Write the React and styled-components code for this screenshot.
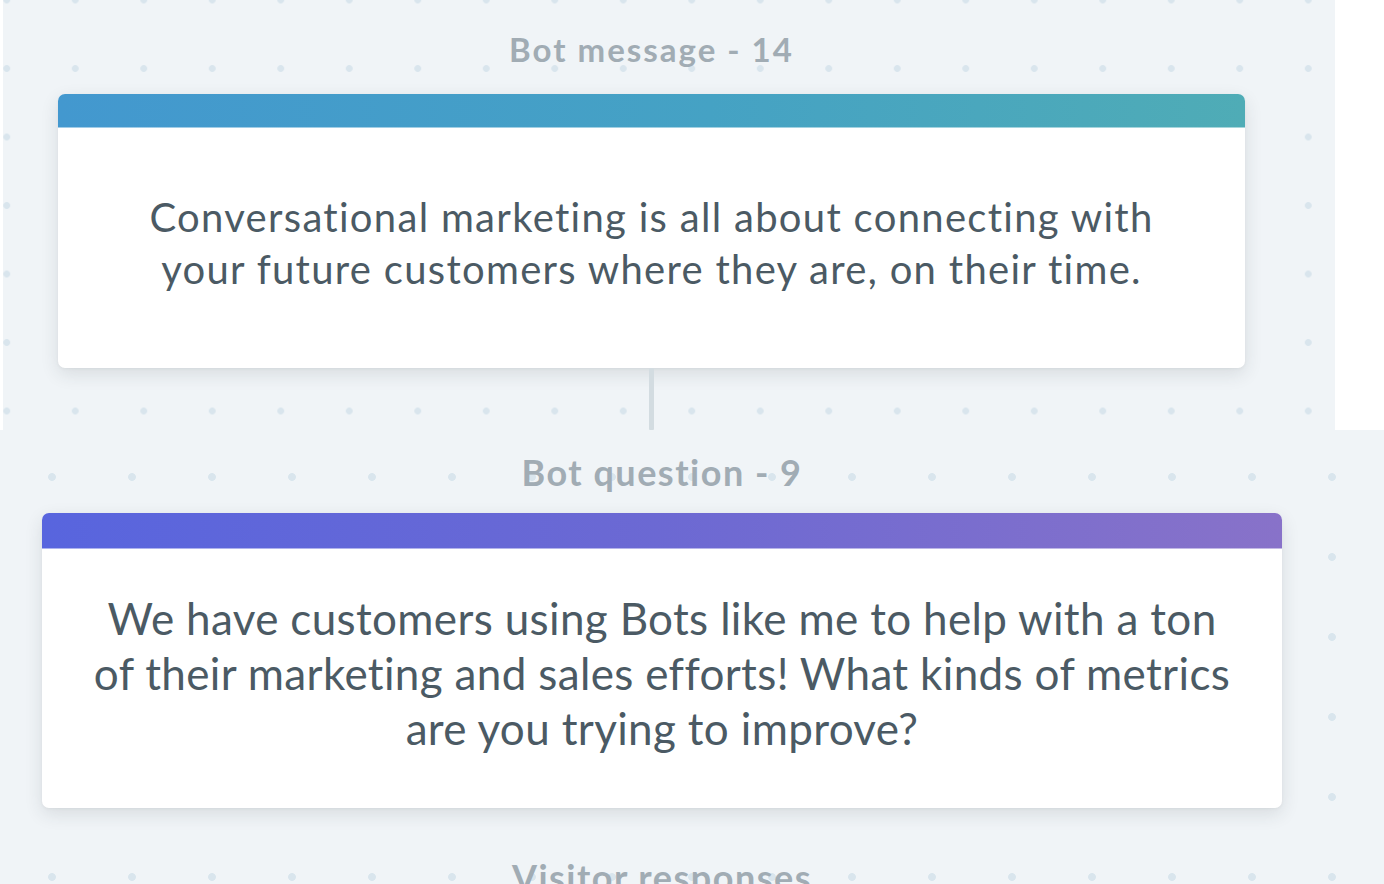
import React from "react";
import styled, { createGlobalStyle } from "styled-components";

const GlobalStyle = createGlobalStyle`
  html, body {
    margin: 0;
    padding: 0;
    background: #ffffff;
    font-family: "Lato", "Liberation Sans", sans-serif;
    font-variant-ligatures: none;
    overflow: hidden;
  }
`;

const Page = styled.div`
  width: 1384px;
  height: 884px;
  display: flex;
  flex-direction: column;
  overflow: hidden;
`;

const Canvas = styled.div`
  box-sizing: border-box;
  flex: none;
  display: flex;
  flex-direction: column;
  align-items: stretch;
  overflow: hidden;
  background-color: #f0f4f7;
  background-image: radial-gradient(
    circle,
    #d9e5ed ${(props) => props.dot}px,
    rgba(217, 229, 237, 0) ${(props) => props.dot + 0.8}px
  );
  background-size: ${(props) => props.grid}px ${(props) => props.grid}px;
  background-position: ${(props) => props.offset};
  width: ${(props) => props.width}px;
  height: ${(props) => props.height}px;
  margin-left: ${(props) => props.shift}px;
  padding: ${(props) => props.pad};

  & > * {
    flex: none;
  }
`;

const StepLabel = styled.div`
  text-align: center;
  color: #a1acb4;
  font-weight: 700;
  font-size: ${(props) => props.size}px;
  line-height: ${(props) => props.size * 1.2}px;
  letter-spacing: ${(props) => props.spacing}px;
  margin-top: ${(props) => props.top || 0}px;
  margin-bottom: ${(props) => props.gap || 0}px;
`;

const Card = styled.div`
  background: #ffffff;
  border-radius: 7px;
  box-shadow: 0 6px 18px rgba(40, 50, 60, 0.12), 0 1px 3px rgba(40, 50, 60, 0.05);
  overflow: hidden;
`;

const CardHeader = styled.div`
  height: ${(props) => props.height}px;
  background: ${(props) => props.gradient};
  border-bottom: 1px solid rgba(255, 255, 255, 0.5);
`;

const CardBody = styled.div`
  box-sizing: border-box;
  height: ${(props) => props.height}px;
  padding: ${(props) => props.pad};
  text-align: center;
  white-space: nowrap;
  color: #4b5a64;
  font-size: ${(props) => props.size}px;
  line-height: ${(props) => props.lh}px;
  letter-spacing: ${(props) => props.spacing}px;
`;

const Connector = styled.div`
  align-self: center;
  width: 5px;
  height: 62px;
  background: #d3dce1;
  border-radius: 1px;
`;

export default function App() {
  return (
    <Page>
      <GlobalStyle />
      <Canvas
        width={1332}
        height={430}
        shift={3}
        grid={68.5}
        dot={3}
        offset="-30.5px -34.25px"
        pad="30px 90px 0 55px"
      >
        <StepLabel size={33} spacing={2} gap={24}>
          Bot message - 14
        </StepLabel>
        <Card>
          <CardHeader
            height={33}
            gradient="linear-gradient(90deg, #4398cf 0%, #45a2c4 55%, #4facb6 100%)"
          />
          <CardBody height={240} size={40} lh={52} spacing={1.3} pad="63px 0 0">
            Conversational marketing is all about connecting with
            <br />
            your future customers where they are, on their time.
          </CardBody>
        </Card>
        <Connector />
      </Canvas>
      <Canvas
        width={1384}
        height={454}
        shift={0}
        grid={80}
        dot={3.5}
        offset="12px 7px"
        pad="21px 102px 0 42px"
      >
        <StepLabel size={36} spacing={1.5} gap={19}>
          Bot question - 9
        </StepLabel>
        <Card>
          <CardHeader
            height={35}
            gradient="linear-gradient(90deg, #5865de 0%, #6c69d3 50%, #8872c9 100%)"
          />
          <CardBody height={259} size={44} lh={55} spacing={0.35} pad="42px 0 0">
            We have customers using Bots like me to help with a ton
            <br />
            of their marketing and sales efforts! What kinds of metrics
            <br />
            are you trying to improve?
          </CardBody>
        </Card>
        <StepLabel size={36} spacing={1.5} top={48}>
          Visitor responses
        </StepLabel>
      </Canvas>
    </Page>
  );
}
